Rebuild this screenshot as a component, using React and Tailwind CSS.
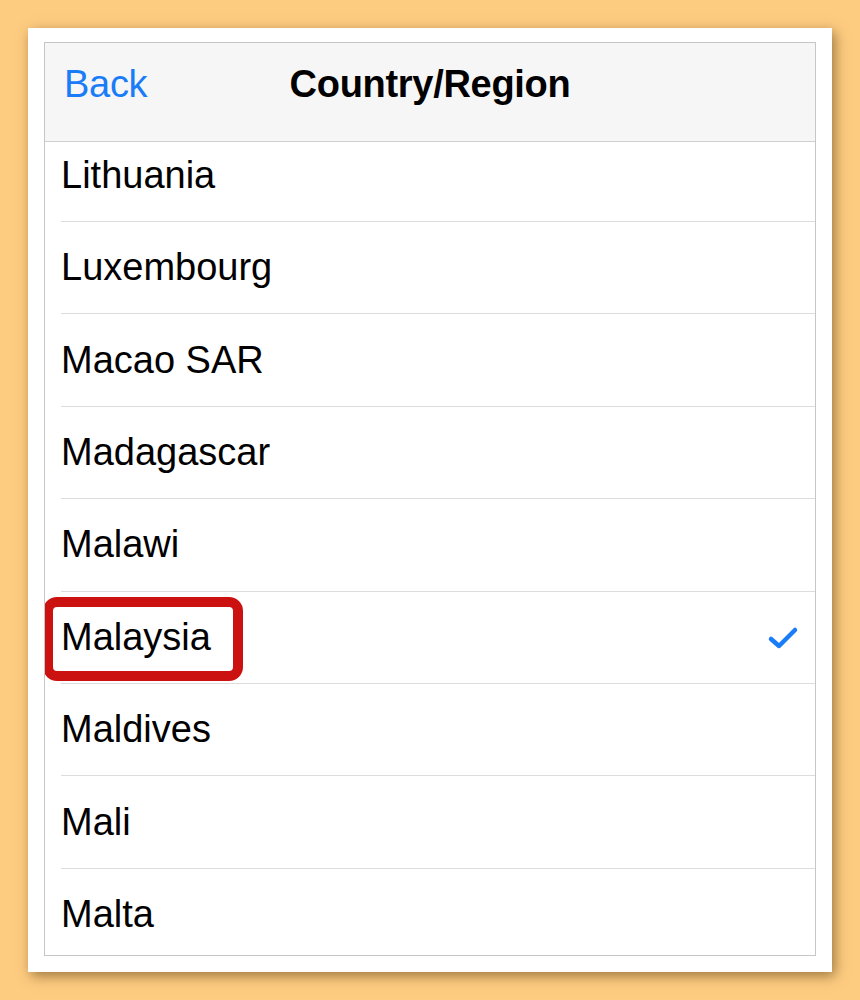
import React from "react";

const COUNTRIES = ["Lithuania", "Luxembourg", "Macao SAR", "Madagascar", "Malawi", "Malaysia", "Maldives", "Mali", "Malta"];

export default function App() {
    return (
        <div className="w-[860px] h-[1000px] bg-[#fecc80] pt-[28px] pl-[28px]" style={{ fontFamily: '"Liberation Sans", Arial, sans-serif' }}>
            <div className="w-[804px] h-[944px] bg-white shadow-[3px_4px_12px_rgba(60,40,0,0.5)] pt-[14px] px-[16px]">
                <div className="relative h-[914px] border border-[#c6c6c6] overflow-hidden flex flex-col">
                    {/* nav bar */}
                    <div className="relative z-10 h-[99px] shrink-0 bg-[#f6f6f6] border-b border-[#cfcfcf]">
                        <div className="relative h-[82px] flex items-center justify-center">
                            <span className="absolute left-[19px] text-[38px] text-[#1a7cf6] tracking-[-0.3px]">Back</span>
                            <span className="text-[38px] font-bold text-black tracking-[-0.3px]">Country/Region</span>
                        </div>
                    </div>

                    {/* list, scrolled a little under the header */}
                    <div className="-mt-[12.4px]">
                        {COUNTRIES.map((c) => (
                            <Row key={c} label={c} selected={c === "Malaysia"} />
                        ))}
                    </div>
                </div>
            </div>
        </div>
    );
}

const Row = ({ label, selected }) => (
    <div className="relative h-[92.4px] pl-[16px] flex">
        <div className="flex-1 flex items-center justify-between border-b border-[#dcdcdc] pr-[16px]">
            <span className="text-[38px] text-black">{label}</span>
            {selected && (
                <svg width="32" height="26" viewBox="0 0 32 26">
                    <path d="M4 15 L12 22 L28 6" fill="none" stroke="#1a7cf6" strokeWidth="4.5" strokeLinecap="round" strokeLinejoin="round" />
                </svg>
            )}
        </div>
        {selected && (
            <div className="absolute left-[-2px] top-[5px] w-[200px] h-[84px] border-[10.5px] border-[#cc1111] rounded-[14px]" />
        )}
    </div>
);
